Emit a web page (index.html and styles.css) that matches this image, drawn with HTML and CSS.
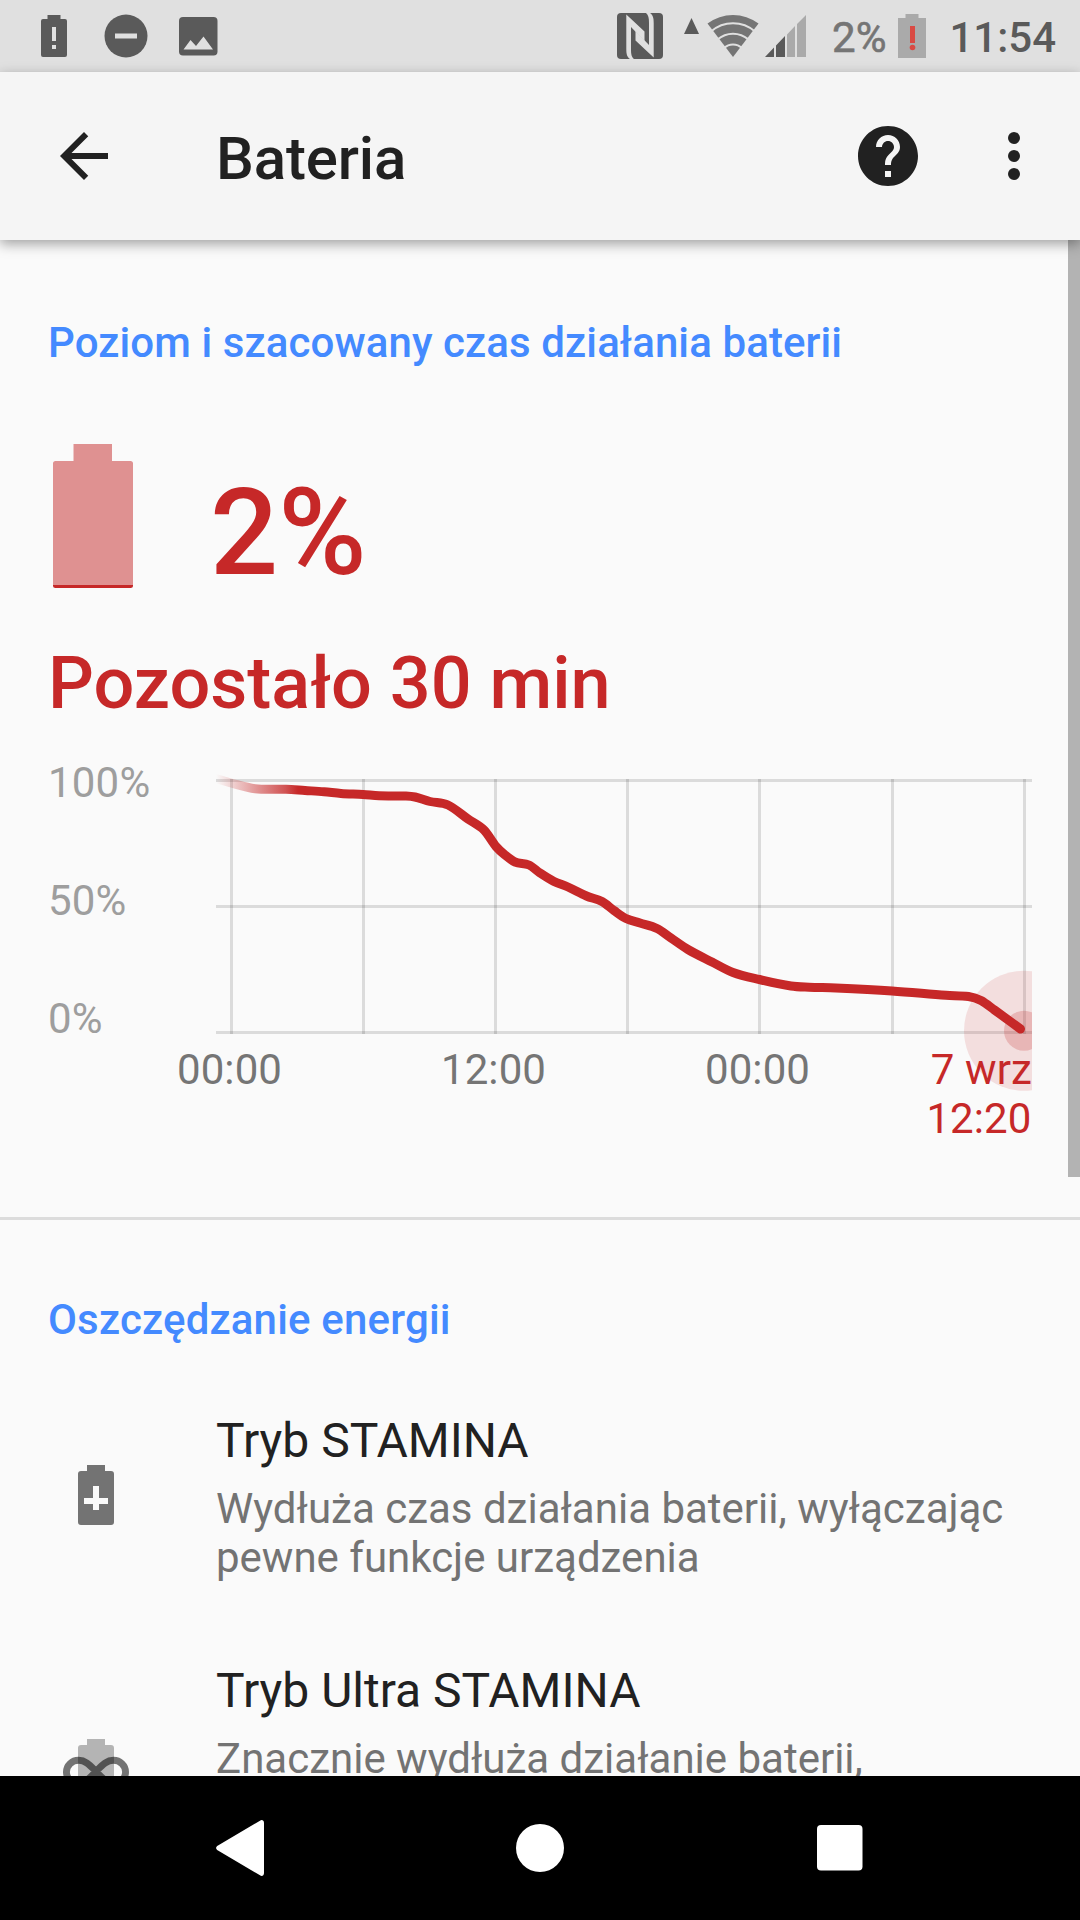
FILE: index.html
```html
<!DOCTYPE html>
<html lang="pl">
<head>
  <meta charset="UTF-8" />
  <meta name="viewport" content="width=device-width, initial-scale=1.0" />
  <title>Bateria</title>
  <link rel="stylesheet" href="styles.css">
</head>
<body>
  <div class="status-bar">
    <svg class="st-battery-alert" width="26" height="42" viewBox="0 0 26 42">
      <path fill="#5a5a5a" fill-rule="evenodd" d="M6.500 0h13v4H24a2 2 0 0 1 2 2v34a2 2 0 0 1-2 2H2a2 2 0 0 1-2-2V6a2 2 0 0 1 2-2h4.500zM11 12v14h4V12zM11 30v4h4v-4z"/>
    </svg>
    <svg class="st-dnd" width="44" height="44" viewBox="0 0 44 44">
      <circle cx="22" cy="22" r="21.500" fill="#5a5a5a"/>
      <rect x="11" y="19.500" width="22" height="5" fill="#e0e0e0"/>
    </svg>
    <svg class="st-image" width="39" height="39" viewBox="0 0 39 39">
      <rect width="38.500" height="38.500" rx="4" fill="#5a5a5a"/>
      <path fill="#e0e0e0" d="M4.500 32.500 11.500 23l5.500 6 7.500-9.500 9.500 13z"/>
    </svg>
    <div class="status-right">
      <svg class="st-nfc" width="46" height="46" viewBox="0 0 46 46">
        <rect width="46" height="46" rx="4" fill="#5a5a5a"/>
        <path fill="#e0e0e0" d="M9.300 1.500 27.500 18.500V28L14 14v22c0 5 .5 8 3 10h-4c-3-2-3.700-5-3.700-10z"/>
        <path fill="#e0e0e0" transform="rotate(180 23 23)" d="M9.300 1.500 27.500 18.500V28L14 14v22c0 5 .5 8 3 10h-4c-3-2-3.700-5-3.700-10z"/>
      </svg>
      <svg class="st-arrow" width="15" height="16" viewBox="0 0 15 16">
        <path fill="#5a5a5a" d="M7.500 0 15 16H0z"/>
      </svg>
      <svg class="st-wifi" width="52" height="44" viewBox="0 0 52 44">
        <path fill="#757575" d="M26 43 .5 9.500a42.500 42.500 0 0 1 51 0z"/>
        <g fill="none" stroke="#e0e0e0" stroke-width="2">
          <path d="M4 17.500a33.500 33.500 0 0 1 44 0"/>
          <path d="M10.500 25.500a23.500 23.500 0 0 1 31 0"/>
          <path d="M17 34a13 13 0 0 1 18 0"/>
        </g>
      </svg>
      <svg class="st-signal" width="42" height="42" viewBox="0 0 42 42">
        <path fill="#5a5a5a" d="M0 42 9 32.500V42zM11 30.500 20 21v21h-9z"/>
        <path fill="#aaa" d="M22 19.500 30 11v31h-8zM32 9l9-9v42h-9z"/>
      </svg>
      <span class="st-percent">2%</span>
      <svg class="st-battery" width="28" height="44" viewBox="0 0 28 44">
        <path fill="#aaa" d="M7.500 0h13v4H28v40H0V4h7.500z"/>
        <path fill="#d94a43" d="M12 12h5v17h-5z"/>
        <circle cx="14.500" cy="33.500" r="2.800" fill="#d94a43"/>
      </svg>
      <span class="st-clock">11:54</span>
    </div>
  </div>

  <div class="toolbar">
    <svg class="back" width="72" height="72" viewBox="0 0 24 24">
      <path fill="#212121" d="M20 11H7.830l5.590-5.590L12 4l-8 8 8 8 1.410-1.410L7.830 13H20v-2z"/>
    </svg>
    <h1>Bateria</h1>
    <svg class="help" width="72" height="72" viewBox="0 0 24 24">
      <path fill="#212121" fill-rule="evenodd" d="M12 2C6.480 2 2 6.480 2 12s4.480 10 10 10 10-4.480 10-10S17.520 2 12 2zm1 17h-2v-2h2v2zm2.070-7.750l-.9.920C13.450 12.900 13 13.500 13 15h-2v-.5c0-1.100.45-2.100 1.170-2.830l1.240-1.260c.37-.36.59-.86.59-1.410 0-1.100-.9-2-2-2s-2 .9-2 2H8c0-2.210 1.790-4 4-4s4 1.790 4 4c0 .88-.36 1.680-.93 2.250z"/>
    </svg>
    <svg class="more" width="72" height="72" viewBox="0 0 24 24">
      <g fill="#212121">
        <circle cx="12" cy="6" r="2"/>
        <circle cx="12" cy="12" r="2"/>
        <circle cx="12" cy="18" r="2"/>
      </g>
    </svg>
  </div>

  <div class="content">
    <div class="scrollbar"></div>

    <div class="usage">
      <h2>Poziom i szacowany czas działania baterii</h2>
      <div class="level">
        <svg width="80" height="144" viewBox="0 0 80 144">
          <path fill="#df9191" d="M20.500 0H59v17h18.500a2.500 2.500 0 0 1 2.500 2.500V141H0V19.500A2.500 2.500 0 0 1 2.500 17h18z"/>
          <path fill="#c62828" d="M0 141h80v.5a2.500 2.500 0 0 1-2.500 2.500h-75A2.500 2.500 0 0 1 0 141.500z"/>
        </svg>
        <span>2%</span>
      </div>
      <p class="remaining">Pozostało 30 min</p>

      <div class="chart">
        <div class="chart-y">
          <span>100%</span>
          <span>50%</span>
          <span>0%</span>
        </div>
        <svg class="chart-plot" width="816" height="400" viewBox="0 0 816 400">
          <defs>
            <linearGradient id="fade" gradientUnits="userSpaceOnUse" x1="0" y1="0" x2="82" y2="0">
              <stop offset="0" stop-color="#c62828" stop-opacity="0"/>
              <stop offset=".5" stop-color="#c62828" stop-opacity=".48"/>
              <stop offset=".85" stop-color="#c62828" stop-opacity=".8"/>
              <stop offset="1" stop-color="#c62828"/>
            </linearGradient>
            <clipPath id="plotClip"><rect width="816" height="400"/></clipPath>
          </defs>
          <g class="grid">
            <rect x="0" y="21" width="816" height="3"/>
            <rect x="0" y="147" width="816" height="3"/>
            <rect x="0" y="273" width="816" height="3"/>
            <rect x="14" y="21" width="3" height="255"/>
            <rect x="146" y="21" width="3" height="255"/>
            <rect x="278" y="21" width="3" height="255"/>
            <rect x="410" y="21" width="3" height="255"/>
            <rect x="542" y="21" width="3" height="255"/>
            <rect x="675" y="21" width="3" height="255"/>
            <rect x="807" y="21" width="3" height="255"/>
          </g>
          <g class="pulse" clip-path="url(#plotClip)">
            <circle cx="808" cy="272.700" r="60" fill-opacity=".13"/>
            <circle cx="808" cy="272.700" r="20" fill-opacity=".22"/>
          </g>
          <path id="line" class="line" clip-path="url(#plotClip)"/>
          <text x="13.500" y="326" text-anchor="middle">00:00</text>
          <text x="277.500" y="326" text-anchor="middle">12:00</text>
          <text x="541.500" y="326" text-anchor="middle">00:00</text>
          <text class="end" x="816" y="326" text-anchor="end">7 wrz</text>
          <text class="end" x="815.500" y="375" text-anchor="end">12:20</text>
        </svg>
      </div>
    </div>

    <div class="saving">
      <h2>Oszczędzanie energii</h2>
      <div class="row">
        <svg width="72" height="72" viewBox="0 0 24 24">
          <path fill="#737373" fill-rule="evenodd" d="M9 2h6v2h2a1 1 0 0 1 1 1v16a1 1 0 0 1-1 1H7a1 1 0 0 1-1-1V5a1 1 0 0 1 1-1h2zM11 9v4H8v2h3v2h2v-2h3v-2h-3V9z" transform="translate(0 0)"/>
        </svg>
        <div>
          <h3>Tryb STAMINA</h3>
          <p>Wydłuża czas działania baterii, wyłączając pewne funkcje urządzenia</p>
        </div>
      </div>
      <div class="row">
        <svg class="ultra" width="72" height="72" viewBox="0 0 24 24">
          <path fill="#000" fill-opacity=".28" d="M9 2h6v2h2a1 1 0 0 1 1 1v16a1 1 0 0 1-1 1H7a1 1 0 0 1-1-1V5a1 1 0 0 1 1-1h2z"/>
          <path fill="none" stroke="#000" stroke-opacity=".54" stroke-width="2.300" d="M12 12.800C10 10.800 8.500 9.100 6.200 9.100a4.050 3.900 0 0 0 0 7.800C8.500 16.900 10 14.800 12 12.800s3.500-3.700 5.800-3.700a4.050 3.900 0 0 1 0 7.800C15.500 16.900 14 14.800 12 12.800z"/>
        </svg>
        <div>
          <h3>Tryb Ultra STAMINA</h3>
          <p>Znacznie wydłuża działanie baterii,</p>
        </div>
      </div>
    </div>
  </div>

  <div class="nav-bar">
    <svg width="50" height="58" viewBox="0 0 50 58">
      <path fill="#fff" d="M49 4v50c0 3-2.500 3.500-4 2.300L3 31.500c-2.500-1.600-2.500-3.400 0-5L45 1.700C46.500.5 49 1 49 4z"/>
    </svg>
    <svg class="home" width="48" height="48" viewBox="0 0 48 48">
      <circle cx="24" cy="24" r="24" fill="#fff"/>
    </svg>
    <svg width="46" height="46" viewBox="0 0 46 46">
      <rect width="45.500" height="45.500" rx="4" fill="#fff"/>
    </svg>
  </div>

  <script>
    // battery level samples, in plot coordinates
    const points = [
      [0, 20.5], [15, 25], [39, 30.7], [70, 31.3], [89, 32.5], [108, 33.7], [125, 35.5],
      [147, 36.5], [163, 37.8], [190, 38], [199, 39], [214, 43.5], [232, 47], [252, 61],
      [268, 72], [280, 88.5], [289, 97], [299, 104], [313, 107], [324, 115], [338, 123.5],
      [352, 129], [370.5, 138], [386, 143.5], [398, 152.5], [410, 160.5], [424, 165],
      [441, 170.5], [455, 180], [472, 191.5], [496, 204], [517, 214.5], [543.5, 221.5],
      [575, 228], [593, 229.2], [620, 230], [676, 233], [730, 237.3], [752.5, 238.5],
      [765, 242.5], [778.5, 252], [804.5, 271]
    ];

    function smooth(pts) {
      let d = "M" + pts[0];
      for (let i = 0; i < pts.length - 1; i++) {
        const p0 = pts[i - 1] || pts[i];
        const p1 = pts[i];
        const p2 = pts[i + 1];
        const p3 = pts[i + 2] || p2;
        const k = (p2[0] - p1[0]) / 3;
        const s1 = (p2[1] - p0[1]) / (p2[0] - p0[0]);
        const s2 = (p3[1] - p1[1]) / (p3[0] - p1[0]);
        d += `C${p1[0] + k} ${p1[1] + s1 * k} ${p2[0] - k} ${p2[1] - s2 * k} ${p2}`;
      }
      return d;
    }

    document.getElementById("line").setAttribute("d", smooth(points));
  </script>
</body>
</html>
```

FILE: styles.css
```css
* { box-sizing: border-box; }
body { margin: 0; width: 1080px; height: 1920px; overflow: hidden; display: flex; flex-direction: column; background: #fafafa; color: #212121; font-family: Roboto, sans-serif; }
h1, h2, h3, p { margin: 0; }
svg { display: block; flex: none; }

.status-bar { height: 72px; flex: none; background: #e0e0e0; display: flex; align-items: center; padding: 0 24px 0 41px; }
.st-dnd { margin-left: 37px; }
.st-image { margin-left: 31px; }
.status-right { margin-left: auto; display: flex; align-items: center; font-size: 42px; line-height: 50px; font-weight: 500; color: #5a5a5a; }
.st-arrow { margin: 0 8px 20px 21px; }
.st-signal { margin-left: 6px; }
.st-percent { margin-left: 25px; margin-top: 3px; font-weight: 400; color: #757575; -webkit-text-stroke: 0.6px #757575; }
.st-battery { margin-left: 12px; }
.st-clock { margin-left: 23px; margin-top: 3px; }

.toolbar { height: 168px; flex: none; display: flex; align-items: center; padding: 0 30px 0 48px; background: #f5f5f5; position: relative; z-index: 2; box-shadow: 0 4px 12px rgba(0, 0, 0, 0.36); }
.toolbar h1 { margin-left: 96px; padding-top: 5px; font-size: 60px; line-height: 70px; font-weight: 500; letter-spacing: -0.15px; }
.toolbar .help { margin-left: auto; }
.toolbar .more { margin-left: 54px; }

.content { flex: 1; min-height: 0; overflow: hidden; position: relative; }
.scrollbar { position: absolute; top: 0; right: 0; width: 12px; height: 937px; background: #b3b3b3; }
.content h2 { font-size: 42px; line-height: 49px; font-weight: 500; letter-spacing: 0.1px; color: #448aff; }

.usage { height: 980px; padding: 78px 48px 0; border-bottom: 3px solid #dcdcdc; color: #c62828; }
.level { display: flex; height: 144px; margin-top: 77px; padding-left: 5px; }
.level span { margin-left: 77px; padding-top: 19px; font-size: 120px; line-height: 140px; font-weight: 500; }
.remaining { margin-top: 54px; font-size: 72px; line-height: 84px; font-weight: 500; }
.chart { display: flex; margin-top: 32px; }
.chart-y { width: 168px; height: 285px; display: flex; flex-direction: column; justify-content: space-between; font-size: 42px; line-height: 49px; letter-spacing: 0.2px; color: #9e9e9e; }
.chart-plot { overflow: visible; font-size: 42px; letter-spacing: 0.1px; fill: #757575; }
.grid { fill: #000; fill-opacity: 0.12; }
.pulse { fill: #c62828; }
.line { fill: none; stroke: url(#fade); stroke-width: 9; stroke-linecap: round; stroke-linejoin: round; }
.chart-plot .end { fill: #c62828; }

.saving { padding: 75px 48px 0; }
.saving h2 { letter-spacing: 0.18px; }
.row { display: flex; padding-left: 12px; margin-top: 69px; }
.row + .row { margin-top: 81px; }
.row svg { margin-top: 46px; }
.row .ultra { margin-top: 70px; }
.row div { margin-left: 84px; }
.row h3 { font-size: 48px; line-height: 56px; font-weight: 400; }
.row p { width: 816px; margin-top: 15px; font-size: 42px; line-height: 49px; color: #737373; }

.nav-bar { height: 144px; flex: none; background: #000; display: flex; align-items: center; justify-content: space-between; padding: 0 217px 0 215px; }
.nav-bar .home { margin-right: 2px; }
```
